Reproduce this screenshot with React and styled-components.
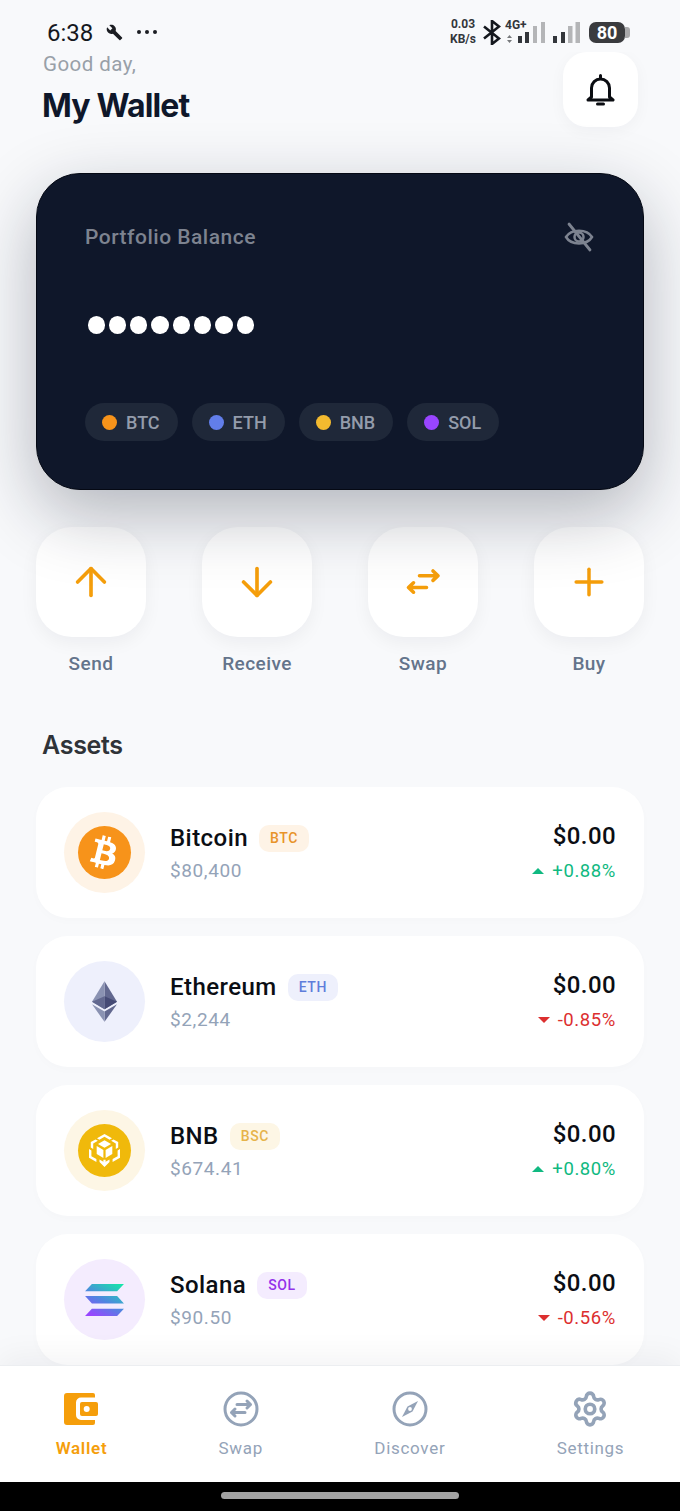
import React from "react";
import styled, { createGlobalStyle } from "styled-components";
import { ArrowUp, ArrowDown, Plus, Settings } from "lucide-react";
import { FaBtc } from "react-icons/fa";
import { MdBuild } from "react-icons/md";

const GlobalStyle = createGlobalStyle`
	html, body {
		margin: 0;
		padding: 0;
		background: #f8f9fb;
	}
	* {
		box-sizing: border-box;
	}
`;

/*

Page frame

*/
const Page = styled.div`
	width: 680px;
	height: 1511px;
	display: flex;
	flex-direction: column;
	overflow: hidden;
	background: #f8f9fb;
	font-family: "Roboto", "Liberation Sans", sans-serif;
`;

const Scroll = styled.div`
	flex: 1;
	min-height: 0;
	overflow: hidden;
	padding: 0 36px;
`;

/*

Status bar

*/
const StatusBar = styled.div`
	height: 52px;
	padding: 8px 50px 0 47px;
	display: flex;
	justify-content: space-between;
	align-items: flex-start;
	flex-shrink: 0;
`;

const StatusLeft = styled.div`
	display: flex;
	align-items: center;
	height: 50px;
	color: #1b1d22;
`;

const Clock = styled.span`
	font-size: 24px;
	line-height: 50px;
	margin-right: 13px;
	color: #15181e;
`;

const WrenchBox = styled.span`
	display: flex;
	margin-right: 13px;
	margin-top: -1px;
`;

const MoreBox = styled.span`
	display: flex;
	margin-top: -2px;
`;

const StatusRight = styled.div`
	display: flex;
	align-items: flex-end;
	height: 23px;
	margin-top: 12px;
`;

const Speed = styled.div`
	display: flex;
	flex-direction: column;
	align-items: center;
	width: 26px;
	margin-bottom: -4px;
	font-size: 12px;
	line-height: 15px;
	font-weight: 700;
	color: #33363b;
	white-space: nowrap;
`;

const BluetoothBox = styled.span`
	display: flex;
	margin: 0 4px -2px 7px;
`;

const NetWrap = styled.div`
	position: relative;
	display: flex;
	width: 40px;
	height: 21px;
	margin-right: 8px;
`;

const NetLabel = styled.span`
	position: absolute;
	left: 0;
	top: -3px;
	font-size: 12px;
	font-weight: 700;
	line-height: 12px;
	color: #33363b;
`;

const Battery = styled.div`
	display: flex;
	align-items: center;
	margin-left: 9px;
`;

const BatteryBody = styled.span`
	width: 36px;
	height: 21px;
	border-radius: 7px;
	background: #3a3b3e;
	color: #fff;
	font-size: 18px;
	font-weight: 700;
	line-height: 21px;
	text-align: center;
`;

const BatteryTip = styled.span`
	width: 5px;
	height: 11px;
	border-radius: 0 3px 3px 0;
	background: #a9a9ab;
`;

/*

Header

*/
const Header = styled.header`
	display: flex;
	justify-content: space-between;
	align-items: flex-start;
	padding: 0 6px 0 7px;
`;

const Greeting = styled.div`
	font-size: 20.5px;
	line-height: 24px;
	letter-spacing: 0.45px;
	color: #98a0a8;
`;

const Title = styled.h1`
	margin: 8px 0 0 -1px;
	font-family: "Inter", "Liberation Sans", sans-serif;
	font-size: 32px;
	line-height: 44px;
	font-weight: 700;
	letter-spacing: -0.85px;
	color: #0f172a;
`;

const BellButton = styled.div`
	width: 75px;
	height: 75px;
	border-radius: 24px;
	background: #fff;
	display: flex;
	align-items: center;
	justify-content: center;
	box-shadow: 0 4px 16px rgba(15, 23, 42, 0.04);
`;

/*

Balance card

*/
const Card = styled.section`
	position: relative;
	z-index: 1;
	height: 317px;
	margin-top: 45px;
	padding: 48px 49px 0 48px;
	border-radius: 44px;
	background: #0f172a;
	border: 1px solid #050914;
	box-shadow: 0 24px 70px rgba(15, 23, 42, 0.3);
`;

const CardTop = styled.div`
	display: flex;
	justify-content: space-between;
	align-items: center;
`;

const CardLabel = styled.span`
	font-size: 21px;
	line-height: 30px;
	font-weight: 500;
	letter-spacing: 0.5px;
	color: #7d8390;
`;

const MaskedBalance = styled.div`
	display: flex;
	gap: 4px;
	margin-top: 64px;
	padding-left: 2.5px;
`;

const MaskDot = styled.span`
	width: 17.3px;
	height: 18px;
	border-radius: 50%;
	background: #fff;
`;

const Pills = styled.div`
	display: flex;
	gap: 14px;
	margin-top: 69px;
`;

const Pill = styled.div`
	height: 38px;
	padding: 0 18px 0 17px;
	border-radius: 19px;
	background: #1f2839;
	display: flex;
	align-items: center;
	gap: 9px;
	font-size: 18px;
	font-weight: 500;
	color: #949cab;
`;

const Dot = styled.span`
	width: 15px;
	height: 15px;
	border-radius: 50%;
	background: ${props => props.color};
`;

/*

Quick actions

*/
const Actions = styled.div`
	display: flex;
	justify-content: space-between;
	margin-top: 37px;
`;

const Action = styled.div`
	display: flex;
	flex-direction: column;
	align-items: center;
	gap: 16px;
	font-size: 19px;
	line-height: 22px;
	font-weight: 500;
	letter-spacing: 0.45px;
	color: #64748b;
`;

const ActionButton = styled.div`
	width: 110px;
	height: 110px;
	border-radius: 36px;
	background: #fff;
	display: flex;
	align-items: center;
	justify-content: center;
	color: #f59e0b;
	box-shadow: 0 6px 18px rgba(15, 23, 42, 0.05);
`;

/*

Assets

*/
const SectionTitle = styled.h2`
	margin: 54px 0 0 6px;
	font-family: "Inter", "Liberation Sans", sans-serif;
	font-size: 25px;
	line-height: 32px;
	font-weight: 600;
	letter-spacing: -0.3px;
	color: #2f3338;
`;

const AssetList = styled.div`
	display: flex;
	flex-direction: column;
	gap: 18px;
	margin-top: 26px;
`;

const AssetCard = styled.div`
	height: 131px;
	padding: 0 28px;
	border-radius: 32px;
	background: #fff;
	display: flex;
	align-items: center;
	box-shadow: 0 3px 10px rgba(15, 23, 42, 0.015);
`;

const IconCircle = styled.div`
	width: 81px;
	height: 81px;
	border-radius: 50%;
	background: ${props => props.bg};
	display: flex;
	align-items: center;
	justify-content: center;
	flex-shrink: 0;
`;

const CoinDisc = styled.div`
	width: 53px;
	height: 53px;
	border-radius: 50%;
	background: ${props => props.bg};
	display: flex;
	align-items: center;
	justify-content: center;
	color: #fff;

	svg {
		transform: rotate(${props => props.tilt || 0}deg);
	}
`;

const AssetInfo = styled.div`
	flex: 1;
	margin-left: 25px;
	padding-top: 1px;
	display: flex;
	flex-direction: column;
	gap: 6px;
`;

const NameRow = styled.div`
	display: flex;
	align-items: center;
	gap: 11px;
`;

const AssetName = styled.span`
	font-size: 24px;
	line-height: 30px;
	font-weight: 500;
	letter-spacing: 0.45px;
	color: #0b0e14;
`;

const Badge = styled.span`
	height: 27px;
	padding: 0 11px;
	border-radius: 10px;
	background: ${props => props.bg};
	color: ${props => props.fg};
	font-size: 14px;
	line-height: 27px;
	font-weight: 500;
	letter-spacing: 0.6px;
`;

const AssetPrice = styled.span`
	font-size: 19px;
	line-height: 24px;
	letter-spacing: 0.6px;
	color: #94a3b8;
`;

const AssetRight = styled.div`
	display: flex;
	flex-direction: column;
	align-items: flex-end;
	gap: 8px;
	padding-bottom: 2px;
`;

const AssetValue = styled.span`
	font-size: 24px;
	line-height: 30px;
	font-weight: 500;
	letter-spacing: 0.4px;
	color: #0b0e14;
`;

const AssetChange = styled.span`
	display: flex;
	align-items: center;
	gap: 8px;
	font-size: 18.5px;
	line-height: 24px;
	letter-spacing: 0.6px;
	color: ${props => (props.up ? "#10b981" : "#dc2f2f")};
`;

// small filled triangle next to the percentage
const Caret = styled.span`
	width: 0;
	height: 0;
	border-left: 6px solid transparent;
	border-right: 6px solid transparent;
	border-${props => (props.up ? "bottom" : "top")}: 6px solid currentColor;
`;

/*

Bottom navigation

*/
const Nav = styled.nav`
	position: relative;
	z-index: 2;
	height: 117px;
	flex-shrink: 0;
	background: #fff;
	border-top: 1px solid #eceef1;
	display: flex;
	justify-content: space-around;
	padding-top: 25px;
	box-shadow: 0 -8px 30px rgba(15, 23, 42, 0.05);
`;

const NavItem = styled.div`
	display: flex;
	flex-direction: column;
	align-items: center;
	gap: 9px;
	font-size: 17px;
	line-height: 24px;
	font-weight: ${props => (props.active ? 600 : 400)};
	letter-spacing: 0.7px;
	color: ${props => (props.active ? "#f59e0b" : "#94a3b8")};
`;

const NavIcon = styled.span`
	display: flex;
	align-items: center;
	justify-content: center;
	height: 36px;
	color: #94a3b8;
`;

const HomeBar = styled.div`
	height: 29px;
	flex-shrink: 0;
	background: #000;
	display: flex;
	justify-content: center;
	padding-top: 10px;
`;

const HomePill = styled.div`
	width: 238px;
	height: 7px;
	border-radius: 4px;
	background: #a3a3a3;
`;

/*

Drawn icons

*/
const MoreIcon = () => (
	<svg width="22" height="6" viewBox="0 0 22 6" fill="currentColor">
		<circle cx="3" cy="3" r="2" />
		<circle cx="11" cy="3" r="2" />
		<circle cx="19" cy="3" r="2" />
	</svg>
);

const BluetoothIcon = () => (
	<svg width="18" height="25" viewBox="0 0 18 25" fill="none" stroke="#15181e" strokeWidth="2.6">
		<path d="M1 6.500l15 12-7 5.500V1l7 5.500L1 18.500" />
	</svg>
);

// 4G signal with the small up/down arrows on the left of the bars
const NetSignalIcon = () => (
	<svg width="40" height="21" viewBox="0 0 40 21">
		<path d="M4.500 13l2.500 3H2zM4.500 21L2 18h5z" fill="#77797c" />
		<rect x="13" y="14" width="4" height="7" fill="#33363b" />
		<rect x="20" y="10" width="4" height="11" fill="#33363b" />
		<rect x="28" y="4" width="4" height="17" fill="#b4b5b7" />
		<rect x="36" y="0" width="4" height="21" fill="#b4b5b7" />
	</svg>
);

const SignalIcon = () => (
	<svg width="27" height="21" viewBox="0 0 27 21">
		<rect x="0" y="14" width="4" height="7" fill="#33363b" />
		<rect x="8" y="10" width="4" height="11" fill="#33363b" />
		<rect x="15" y="4" width="4.500" height="17" fill="#b4b5b7" />
		<rect x="22.500" y="0" width="4.500" height="21" fill="#b4b5b7" />
	</svg>
);

const BellIcon = () => (
	<svg width="29" height="33" viewBox="0 0 29 33" fill="none" stroke="#0b0d12" strokeWidth="3" strokeLinejoin="round">
		<path d="M5.500 24V15a9 9 0 0 1 18 0v9l3.500 3H2z" />
		<path d="M14.500 2.500v3M11.500 31h6" strokeLinecap="round" />
	</svg>
);

const EyeHiddenIcon = () => (
	<svg width="30" height="30" viewBox="0 0 30 30" fill="none" stroke="#7d8390" strokeWidth="2.5" strokeLinecap="round">
		<path d="M2 15c5-8.500 21-8.500 26 0-5 8.500-21 8.500-26 0z" />
		<circle cx="15" cy="15" r="4.500" />
		<path d="M5 2l21 26" strokeWidth="2.800" />
	</svg>
);

const SwapIcon = () => (
	<svg width="40" height="40" viewBox="0 0 40 40" fill="none" stroke="currentColor" strokeWidth="3.600" strokeLinecap="round" strokeLinejoin="round">
		<path d="M16.500 13.700H34.500M30 9l5 4.700-5 4.700" />
		<path d="M23.500 25.500H6M10.500 20.800l-5 4.700 5 4.700" />
	</svg>
);

const WalletIcon = () => (
	<svg width="34" height="32" viewBox="0 0 34 32">
		<path
			fill="#f59e0b"
			fillRule="evenodd"
			d="M3 0h26a2 2 0 0 1 2 2v2.600H17a5 5 0 0 0-5 5V22a5 5 0 0 0 5 5h14v3a2 2 0 0 1-2 2H3a3 3 0 0 1-3-3V3a3 3 0 0 1 3-3z"
		/>
		<path fill="#f59e0b" d="M18 9h14a2 2 0 0 1 2 2v10a2 2 0 0 1-2 2H18a2 2 0 0 1-2-2V11a2 2 0 0 1 2-2z" />
		<circle cx="22.700" cy="16" r="3" fill="#fff" />
	</svg>
);

const NavSwapIcon = () => (
	<svg width="36" height="36" viewBox="0 0 36 36" fill="none" stroke="#94a3b8" strokeWidth="3" strokeLinecap="round" strokeLinejoin="round">
		<circle cx="18" cy="18" r="16" />
		<path d="M8.500 21.500H22M8.500 21.500l3.500-3.500M8.500 21.500l3.500 3.500" />
		<path d="M27.500 13.500H14M27.500 13.500L24 10M27.500 13.500L24 17" />
	</svg>
);

const CompassIcon = () => (
	<svg width="36" height="36" viewBox="0 0 36 36">
		<circle cx="18" cy="18" r="16" fill="none" stroke="#94a3b8" strokeWidth="3" />
		<polygon points="26,10 20.500,20.500 10,26 15.500,15.500" fill="#94a3b8" />
		<circle cx="18" cy="18" r="1.900" fill="#fff" />
	</svg>
);

const EthIcon = () => (
	<svg width="25" height="41" viewBox="0 0 256 417">
		<polygon fill="#62688f" points="128,0 256,212 128,288" />
		<polygon fill="#8a92b2" points="128,0 0,212 128,288" />
		<polygon fill="#62688f" points="128,312 256,237 128,417" />
		<polygon fill="#8a92b2" points="128,417 128,312 0,237" />
		<polygon fill="#454a75" points="128,288 256,212 128,154" />
		<polygon fill="#62688f" points="0,212 128,288 128,154" />
	</svg>
);

const BnbIcon = () => (
	<svg width="33" height="33" viewBox="0 0 33 33" fill="#fff">
		<path d="M16.500 0L24 4.300l-2.400 1.400-5.100-2.900-5.100 2.900L9 4.300z" />
		<path d="M7.500 5.400l2.400 1.400-4.700 2.700v5.400L2.800 13.500V8.100z" />
		<path d="M25.500 5.400l-2.400 1.400 4.700 2.700v5.400l2.400-1.400V8.100z" />
		<path d="M16.500 6.300L23 10l-6.500 3.800L10 10z" />
		<path d="M8.700 12l6.700 3.900V24l-6.700-3.900z" />
		<path d="M24.300 12l-6.700 3.900V24l6.700-3.900z" />
		<path d="M1 15l2.400 1.400v5.800l5 2.900V28L1 23.700z" />
		<path d="M32 15l-2.400 1.400v5.800l-5 2.900V28l7.400-4.300z" />
		<path d="M11.500 25.500l3.900 2.200v-1.900h2.200v1.900l3.900-2.200v2.500L16.500 33l-5-5z" />
	</svg>
);

const SolanaIcon = () => (
	<svg width="39" height="34" viewBox="0 0 40 35">
		<defs>
			<linearGradient id="sol" gradientUnits="userSpaceOnUse" x1="32" y1="-2" x2="12" y2="36">
				<stop offset="0" stopColor="#14e8a8" />
				<stop offset="0.55" stopColor="#4f86e0" />
				<stop offset="1" stopColor="#9945ff" />
			</linearGradient>
		</defs>
		<path d="M7 1h33l-7 7.500H0z" fill="url(#sol)" />
		<path d="M0 13.500h33l7 7.500H7z" fill="url(#sol)" />
		<path d="M7 26.500h33L33 34H0z" fill="url(#sol)" />
	</svg>
);

const coins = [
	{ name: "Bitcoin", tag: "BTC", price: "$80,400", change: "+0.88%", up: true, bg: "#fef3e6", tagBg: "#fef3e6", tagFg: "#e8932a" },
	{ name: "Ethereum", tag: "ETH", price: "$2,244", change: "-0.85%", up: false, bg: "#eef0fc", tagBg: "#eef0fc", tagFg: "#5f7ddb" },
	{ name: "BNB", tag: "BSC", price: "$674.41", change: "+0.80%", up: true, bg: "#fdf6e5", tagBg: "#fdf6e5", tagFg: "#e6b34a" },
	{ name: "Solana", tag: "SOL", price: "$90.50", change: "-0.56%", up: false, bg: "#f4ecfe", tagBg: "#f4ecfe", tagFg: "#9333ea" },
];

const coinIcon = tag => {
	if (tag === "BTC") {
		return (
			<CoinDisc bg="#f7931a" tilt={14}>
				<FaBtc size={33} />
			</CoinDisc>
		);
	}
	if (tag === "ETH") return <EthIcon />;
	if (tag === "BSC") {
		return (
			<CoinDisc bg="#f0b90b">
				<BnbIcon />
			</CoinDisc>
		);
	}
	return <SolanaIcon />;
};

export default function App() {
	return (
		<Page>
			<GlobalStyle />
			<StatusBar>
				<StatusLeft>
					<Clock>6:38</Clock>
					<WrenchBox><MdBuild size={17} /></WrenchBox>
					<MoreBox><MoreIcon /></MoreBox>
				</StatusLeft>
				<StatusRight>
					<Speed>
						<span>0.03</span>
						<span>KB/s</span>
					</Speed>
					<BluetoothBox><BluetoothIcon /></BluetoothBox>
					<NetWrap>
						<NetLabel>4G+</NetLabel>
						<NetSignalIcon />
					</NetWrap>
					<SignalIcon />
					<Battery>
						<BatteryBody>80</BatteryBody>
						<BatteryTip />
					</Battery>
				</StatusRight>
			</StatusBar>

			<Scroll>
				<Header>
					<div>
						<Greeting>Good day,</Greeting>
						<Title>My Wallet</Title>
					</div>
					<BellButton>
						<BellIcon />
					</BellButton>
				</Header>

				<Card>
					<CardTop>
						<CardLabel>Portfolio Balance</CardLabel>
						<EyeHiddenIcon />
					</CardTop>
					<MaskedBalance>
						{Array.from({ length: 8 }).map((_, i) => (
							<MaskDot key={i} />
						))}
					</MaskedBalance>
					<Pills>
						<Pill><Dot color="#f7931a" />BTC</Pill>
						<Pill><Dot color="#627eea" />ETH</Pill>
						<Pill><Dot color="#f3ba2f" />BNB</Pill>
						<Pill><Dot color="#9945ff" />SOL</Pill>
					</Pills>
				</Card>

				<Actions>
					<Action>
						<ActionButton><ArrowUp size={46} strokeWidth={1.9} /></ActionButton>
						Send
					</Action>
					<Action>
						<ActionButton><ArrowDown size={46} strokeWidth={1.9} /></ActionButton>
						Receive
					</Action>
					<Action>
						<ActionButton><SwapIcon /></ActionButton>
						Swap
					</Action>
					<Action>
						<ActionButton><Plus size={44} strokeWidth={1.9} /></ActionButton>
						Buy
					</Action>
				</Actions>

				<SectionTitle>Assets</SectionTitle>
				<AssetList>
					{coins.map(coin => (
						<AssetCard key={coin.tag}>
							<IconCircle bg={coin.bg}>{coinIcon(coin.tag)}</IconCircle>
							<AssetInfo>
								<NameRow>
									<AssetName>{coin.name}</AssetName>
									<Badge bg={coin.tagBg} fg={coin.tagFg}>{coin.tag}</Badge>
								</NameRow>
								<AssetPrice>{coin.price}</AssetPrice>
							</AssetInfo>
							<AssetRight>
								<AssetValue>$0.00</AssetValue>
								<AssetChange up={coin.up}>
									<Caret up={coin.up} />
									{coin.change}
								</AssetChange>
							</AssetRight>
						</AssetCard>
					))}
				</AssetList>
			</Scroll>

			<Nav>
				<NavItem active>
					<NavIcon><WalletIcon /></NavIcon>
					Wallet
				</NavItem>
				<NavItem>
					<NavIcon><NavSwapIcon /></NavIcon>
					Swap
				</NavItem>
				<NavItem>
					<NavIcon><CompassIcon /></NavIcon>
					Discover
				</NavItem>
				<NavItem>
					<NavIcon><Settings size={38} strokeWidth={2.3} /></NavIcon>
					Settings
				</NavItem>
			</Nav>
			<HomeBar>
				<HomePill />
			</HomeBar>
		</Page>
	);
}
